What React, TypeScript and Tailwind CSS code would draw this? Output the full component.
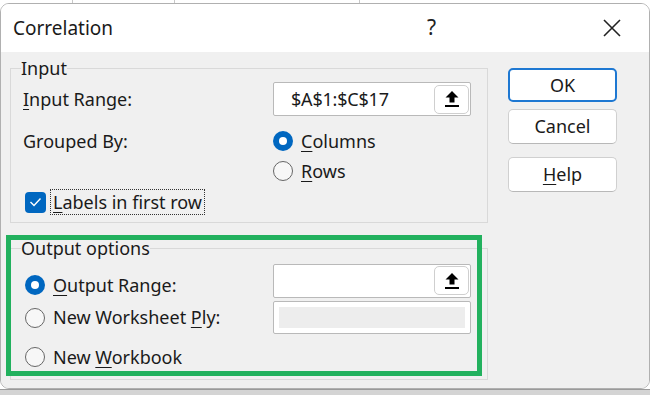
import React from "react";

const font = { fontFamily: '"Noto Sans", "Open Sans", sans-serif' };

function Radio({ checked }: { checked?: boolean }) {
  return checked ? (
    <span className="w-[20px] h-[20px] shrink-0 rounded-full bg-[#0067c0] flex items-center justify-center">
      <span className="w-[8px] h-[8px] rounded-full bg-white" />
    </span>
  ) : (
    <span className="w-[20px] h-[20px] shrink-0 rounded-full border-[1.5px] border-[#666] bg-[#f7f7f7]" />
  );
}

function UploadIcon() {
  return (
    <svg width="16" height="18" viewBox="0 0 16 18">
      <path d="M8 1 L14.5 7.5 L10.5 7.5 L10.5 12.5 L5.5 12.5 L5.5 7.5 L1.5 7.5 Z" fill="#000" />
      <rect x="1" y="15" width="14" height="2" fill="#000" />
    </svg>
  );
}

function RangeInput({ value }: { value?: string }) {
  return (
    <div className="w-[198px] h-[34px] flex items-center bg-white border border-[#b9b9b9] rounded-[2px] pl-[17px] pr-[1px]">
      <span className="flex-1 text-[18px] text-[#1a1a1a] tracking-[-0.2px]">{value}</span>
      <div className="w-[35px] h-[29px] flex items-center justify-center bg-white border border-[#cfcfcf] rounded-[5px]">
        <UploadIcon />
      </div>
    </div>
  );
}

function Button({ children, primary }: { children: React.ReactNode; primary?: boolean }) {
  return (
    <div
      className={
        primary
          ? "w-[109px] h-[34px] flex items-center justify-center bg-white rounded-[5px] border-2 border-[#1e78d2] text-[18px] text-[#1a1a1a]"
          : "w-[109px] h-[35px] flex items-center justify-center bg-white rounded-[5px] border border-[#d0d0d0] border-b-[#b8b8b8] text-[18px] text-[#1a1a1a]"
      }
    >
      {children}
    </div>
  );
}

export default function App() {
  return (
    <div className="w-[650px] h-[395px] bg-white overflow-hidden relative" style={font}>
      {/* grid lines behind the dialog */}
      <div className="h-[3px] flex">
        <div className="w-[73px] border-r border-[#c8c8c8]" />
        <div className="w-[102px] border-r border-[#c8c8c8]" />
        <div className="w-[185px] border-r border-[#c8c8c8]" />
      </div>

      <div className="w-[650px] h-[386px] flex flex-col border border-[#b0b0b0] rounded-[9px] overflow-hidden">
        {/* Title bar */}
        <div className="h-[48px] shrink-0 bg-white flex items-center pl-[12px] text-[19px] text-[#1a1a1a]">
          <span className="flex-1">Correlation</span>
          <span className="w-[18px] text-[21px] mr-[158px] text-[#222]">?</span>
          <svg width="18" height="18" viewBox="0 0 18 18" className="mr-[28px]">
            <path d="M1 1 L17 17 M17 1 L1 17" stroke="#222" strokeWidth="1.6" />
          </svg>
        </div>

        {/* Body */}
        <div className="flex-1 bg-[#f0f0f0] flex pt-[5px] pl-[9px] text-[18px] text-[#1a1a1a]">
          <div className="w-[478px] flex flex-col">
            <fieldset className="h-[166px] border border-[#d9d9d9] px-[12px] m-0">
              <legend className="px-0 ml-[-2px] leading-[22px] h-[22px]">Input</legend>
              <div className="h-[34px] mt-[3px] flex items-center">
                <span className="w-[250px]">
                  <u className="decoration-1 underline-offset-[3px]">I</u>nput Range:
                </span>
                <RangeInput value="$A$1:$C$17" />
              </div>
              <div className="h-[30px] mt-[10px] flex items-center">
                <span className="w-[250px]">Grouped By:</span>
                <Radio checked />
                <span className="ml-[8px]">
                  <u className="decoration-1 underline-offset-[3px]">C</u>olumns
                </span>
              </div>
              <div className="h-[30px] flex items-center pl-[250px]">
                <Radio />
                <span className="ml-[8px]">
                  <u className="decoration-1 underline-offset-[3px]">R</u>ows
                </span>
              </div>
              <div className="h-[28px] mt-[2px] flex items-center pl-[2px]">
                <span className="w-[21px] h-[21px] rounded-[4px] bg-[#0067c0] flex items-center justify-center">
                  <svg width="13" height="10" viewBox="0 0 13 10">
                    <path d="M1.5 5 L5 8.5 L11.5 1.5" stroke="#fff" strokeWidth="1.4" fill="none" />
                  </svg>
                </span>
                <span className="ml-[4px] px-[2px] leading-[24px] border border-dotted border-[#333]">
                  <u className="decoration-1 underline-offset-[3px]">L</u>abels in first row
                </span>
              </div>
            </fieldset>

            <fieldset className="h-[143px] mt-[14px] border border-[#d9d9d9] px-[14px] m-0">
              <legend className="px-0 ml-[-4px] leading-[22px] h-[22px]">Output options</legend>
              <div className="h-[33px] mt-[5px] flex items-center">
                <div className="w-[248px] flex items-center pt-[9px]">
                  <Radio checked />
                  <span className="ml-[8px]">
                    <u className="decoration-1 underline-offset-[3px]">O</u>utput Range:
                  </span>
                </div>
                <RangeInput />
              </div>
              <div className="h-[33px] mt-[4px] flex items-center">
                <div className="w-[248px] flex items-center">
                  <Radio />
                  <span className="ml-[8px]">
                    New Worksheet <u className="decoration-1 underline-offset-[3px]">P</u>ly:
                  </span>
                </div>
                <div className="w-[198px] h-[33px] bg-white border border-[#b9b9b9] rounded-[2px] p-[5px]">
                  <div className="w-full h-full bg-[#ededed]" />
                </div>
              </div>
              <div className="h-[30px] mt-[8px] flex items-center">
                <Radio />
                <span className="ml-[8px]">
                  New <u className="decoration-1 underline-offset-[3px]">W</u>orkbook
                </span>
              </div>
            </fieldset>
          </div>

          <div className="ml-[20px] pt-[11px] flex flex-col">
            <Button primary>OK</Button>
            <div className="mt-[7px]">
              <Button>Cancel</Button>
            </div>
            <div className="mt-[13px]">
              <Button>
                <span>
                  <u className="decoration-1 underline-offset-[3px]">H</u>elp
                </span>
              </Button>
            </div>
          </div>
        </div>
      </div>

      <div className="h-[6px] bg-[#d4d4d4] border-t border-[#9a9a9a]" />

      {/* highlight annotation over the output group */}
      <div className="absolute left-[6px] top-[235px] w-[476px] h-[141px] border-[5px] border-[#22b15e]" />
    </div>
  );
}
